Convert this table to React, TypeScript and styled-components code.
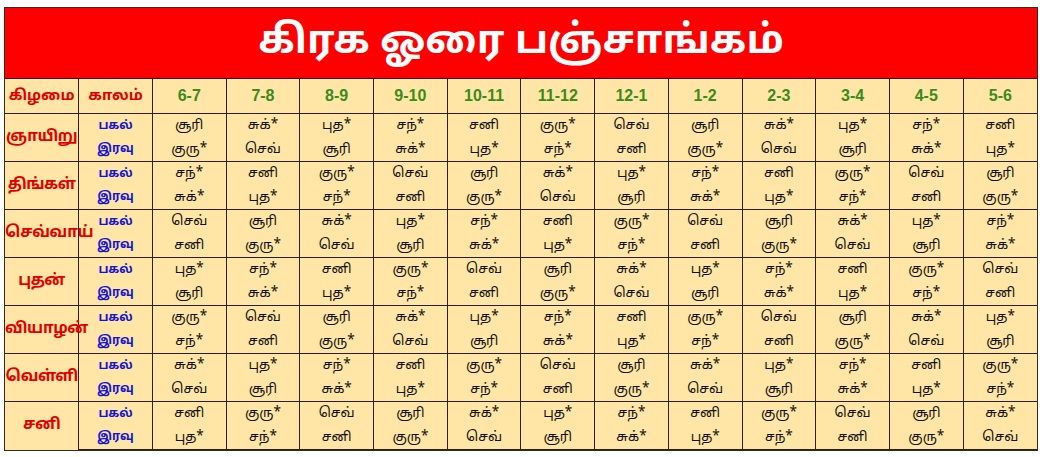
import styled, { createGlobalStyle } from 'styled-components';

const GlobalStyle = createGlobalStyle`
  html, body {
    margin: 0;
    padding: 0;
    background: #ffffff;
  }
`;

// கிரக வரிசை (ஓரை சுழற்சி)
const planets = ['சூரி', 'சுக்*', 'புத*', 'சந்*', 'சனி', 'குரு*', 'செவ்'];

const hours = ['6-7', '7-8', '8-9', '9-10', '10-11', '11-12', '12-1', '1-2', '2-3', '3-4', '4-5', '5-6'];

const days = [
  { name: 'ஞாயிறு', start: 0 },
  { name: 'திங்கள்', start: 3 },
  { name: 'செவ்வாய்', start: 6 },
  { name: 'புதன்', start: 2 },
  { name: 'வியாழன்', start: 5 },
  { name: 'வெள்ளி', start: 1 },
  { name: 'சனி', start: 4 },
];

const tamilFont = `"Noto Sans Tamil", "Lohit Tamil", "Liberation Sans", "Noto Sans", sans-serif`;

const Page = styled.div`
  padding: 7px 4px 0 4px;
  width: 1034px;
`;

const Board = styled.div`
  border: 1.5px solid #3a2a1a;
  background: #ffe6a6;
`;

const Title = styled.h1`
  margin: 0;
  height: 70px;
  background: #fe0000;
  color: #ffffff;
  font-family: ${tamilFont};
  font-size: 40px;
  font-weight: 700;
  display: flex;
  align-items: center;
  justify-content: center;
  border-bottom: 1.5px solid #2a1a10;
`;

const Grid = styled.table`
  width: 100%;
  border-collapse: collapse;
  table-layout: fixed;
  font-family: ${tamilFont};
`;

const HeadCell = styled.th<{ $tone: 'red' | 'green' }>`
  height: 34px;
  padding: 0;
  border: 1.5px solid #2a2016;
  border-top: none;
  font-weight: 700;
  font-size: ${(p) => (p.$tone === 'red' ? '15px' : '16px')};
  color: ${(p) => (p.$tone === 'red' ? '#e10000' : '#3c8a1c')};
  font-family: ${(p) => (p.$tone === 'red' ? tamilFont : `"Liberation Sans", Arial, sans-serif`)};
  &:first-child { border-left: none; }
  &:last-child { border-right: none; }
`;

const DayCell = styled.td`
  padding: 0;
  border: 1.5px solid #2a2016;
  border-left: none;
  text-align: center;
  color: #e10000;
  font-weight: 700;
  font-size: 15.5px;
  letter-spacing: -0.5px;
  white-space: nowrap;
`;

const Cell = styled.td<{ $part: 'top' | 'bottom' }>`
  height: 23.5px;
  padding: 0;
  text-align: center;
  vertical-align: middle;
  font-size: 13.5px;
  color: #111;
  border-left: 1.5px solid #2a2016;
  border-right: 1.5px solid #2a2016;
  border-top: ${(p) => (p.$part === 'top' ? '1.5px solid #2a2016' : 'none')};
  border-bottom: ${(p) => (p.$part === 'bottom' ? '1.5px solid #2a2016' : 'none')};
  &:last-child { border-right: none; }
`;

const PeriodCell = styled(Cell)`
  color: #1414d2;
  font-weight: 700;
  font-size: 12px;
`;

export default function App() {
  return (
    <>
      <GlobalStyle />
      <Page>
        <Board>
          <Title>கிரக ஓரை பஞ்சாங்கம்</Title>
          <Grid>
            <thead>
              <tr>
                <HeadCell $tone="red">கிழமை</HeadCell>
                <HeadCell $tone="red">காலம்</HeadCell>
                {hours.map((h) => (
                  <HeadCell key={h} $tone="green">{h}</HeadCell>
                ))}
              </tr>
            </thead>
            <tbody>
              {days.map((day, di) => {
                const night = (day.start + 12) % 7;
                const last = di === days.length - 1;
                return [
                  <tr key={day.name + '-day'}>
                    <DayCell rowSpan={2} style={last ? { borderBottom: 'none' } : undefined}>
                      {day.name}
                    </DayCell>
                    <PeriodCell $part="top">பகல்</PeriodCell>
                    {hours.map((h, i) => (
                      <Cell key={h} $part="top">{planets[(day.start + i) % 7]}</Cell>
                    ))}
                  </tr>,
                  <tr key={day.name + '-night'}>
                    <PeriodCell $part="bottom">இரவு</PeriodCell>
                    {hours.map((h, i) => (
                      <Cell key={h} $part="bottom">{planets[(night + i) % 7]}</Cell>
                    ))}
                  </tr>,
                ];
              })}
            </tbody>
          </Grid>
        </Board>
      </Page>
    </>
  );
}
